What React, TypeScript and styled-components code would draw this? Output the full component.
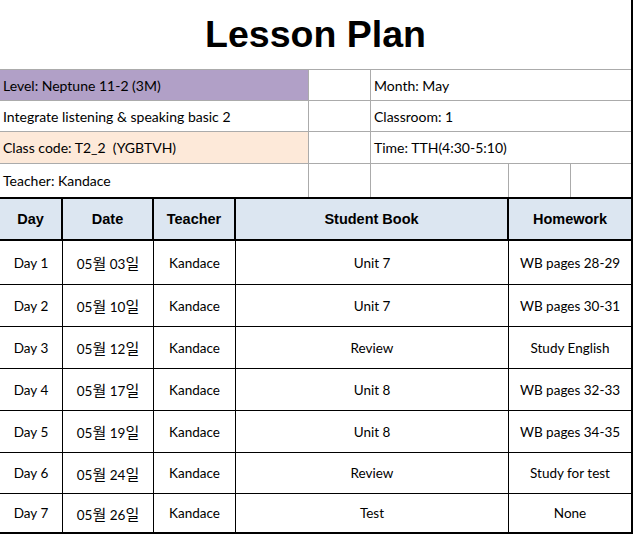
import styled, { createGlobalStyle } from 'styled-components';

type Lesson = { day: string; month: string; date: string; teacher: string; book: string; homework: string };

const lessons: Lesson[] = [
  { day: 'Day 1', month: '05', date: '03', teacher: 'Kandace', book: 'Unit 7', homework: 'WB pages 28-29' },
  { day: 'Day 2', month: '05', date: '10', teacher: 'Kandace', book: 'Unit 7', homework: 'WB pages 30-31' },
  { day: 'Day 3', month: '05', date: '12', teacher: 'Kandace', book: 'Review', homework: 'Study English' },
  { day: 'Day 4', month: '05', date: '17', teacher: 'Kandace', book: 'Unit 8', homework: 'WB pages 32-33' },
  { day: 'Day 5', month: '05', date: '19', teacher: 'Kandace', book: 'Unit 8', homework: 'WB pages 34-35' },
  { day: 'Day 6', month: '05', date: '24', teacher: 'Kandace', book: 'Review', homework: 'Study for test' },
  { day: 'Day 7', month: '05', date: '26', teacher: 'Kandace', book: 'Test', homework: 'None' },
];

const headings = ['Day', 'Date', 'Teacher', 'Student Book', 'Homework'];

function App() {
  return (
    <>
      <GlobalStyle />
      <Sheet>
        <Title>Lesson Plan</Title>
        <InfoGrid>
          <InfoCell $fill="#b1a0c7">Level: Neptune 11-2 (3M)</InfoCell>
          <InfoCell />
          <InfoCell $span={3} $end>Month: May</InfoCell>
          <InfoCell>Integrate listening &amp; speaking basic 2</InfoCell>
          <InfoCell />
          <InfoCell $span={3} $end>Classroom: 1</InfoCell>
          <InfoCell $fill="#fde9d9">Class code: T2_2&nbsp; (YGBTVH)</InfoCell>
          <InfoCell />
          <InfoCell $span={3} $end>Time: TTH(4:30-5:10)</InfoCell>
          <InfoCell $last>Teacher: Kandace</InfoCell>
          <InfoCell $last />
          <InfoCell $last />
          <InfoCell $last />
          <InfoCell $last $end />
        </InfoGrid>
        <Schedule>
          {headings.map(h => (
            <HeadCell key={h}>{h}</HeadCell>
          ))}
          {lessons.map(l => (
            <>
              <BodyCell key={l.day + 'd'}>{l.day}</BodyCell>
              <BodyCell key={l.day + 't'}>
                <DateText>
                  {l.month}<Hangul>월</Hangul> {l.date}<Hangul>일</Hangul>
                </DateText>
              </BodyCell>
              <BodyCell key={l.day + 'k'}>{l.teacher}</BodyCell>
              <BodyCell key={l.day + 'b'}>{l.book}</BodyCell>
              <BodyCell key={l.day + 'h'}>{l.homework}</BodyCell>
            </>
          ))}
        </Schedule>
      </Sheet>
    </>
  );
}

export default App;

const GlobalStyle = createGlobalStyle`
  html, body {
    margin: 0;
    padding: 0;
    background: #ffffff;
  }
  body {
    font-family: Lato, "Noto Sans CJK KR", sans-serif;
    color: #000000;
  }
`;

const Sheet = styled.div`
  box-sizing: border-box;
  width: 633px;
  height: 534px;
  overflow: hidden;
  border-right: 2px solid #000000;
`;

const Title = styled.div`
  height: 69px;
  line-height: 69px;
  text-align: center;
  font-family: "Liberation Sans", Arial, sans-serif;
  font-weight: 700;
  font-size: 37.5px;
`;

const InfoGrid = styled.div`
  display: grid;
  grid-template-columns: 309px 62px 138px 62px 60px;
  grid-template-rows: 31px 31px 32px 33px;
  border-top: 1px solid #ababab;
`;

const InfoCell = styled.div<{ $fill?: string; $span?: number; $last?: boolean; $end?: boolean }>`
  box-sizing: border-box;
  display: flex;
  align-items: center;
  padding-left: 3px;
  font-size: 14px;
  white-space: nowrap;
  background: ${p => p.$fill ?? 'transparent'};
  grid-column: span ${p => p.$span ?? 1};
  border-bottom: ${p => (p.$last ? 'none' : '1px solid #ababab')};
  border-right: ${p => (p.$end ? 'none' : '1px solid #ababab')};
`;

const Schedule = styled.div`
  display: grid;
  grid-template-columns: 63px 91px 82px 273px 122px;
  grid-template-rows: 42px 44px 42px 42px 42px 42px 41px 40px;
  border-top: 2px solid #000000;
`;

const HeadCell = styled.div`
  box-sizing: border-box;
  display: flex;
  align-items: center;
  justify-content: center;
  background: #dce6f1;
  font-family: "Liberation Sans", Arial, sans-serif;
  font-weight: 700;
  font-size: 14.5px;
  border-bottom: 2px solid #000000;
  border-right: 2px solid #000000;
  &:nth-child(5) {
    border-right: none;
  }
`;

const BodyCell = styled.div`
  box-sizing: border-box;
  display: flex;
  align-items: center;
  justify-content: center;
  font-size: 13.5px;
  white-space: nowrap;
  border-bottom: 1px solid #000000;
  border-right: 1px solid #000000;
  &:nth-child(5n) {
    border-right: none;
  }
  &:nth-last-child(-n + 5) {
    border-bottom: 2px solid #000000;
  }
`;

const DateText = styled.span`
  white-space: pre;
`;

const Hangul = styled.span`
  font-family: "Noto Sans CJK KR", sans-serif;
  font-size: 15px;
`;
